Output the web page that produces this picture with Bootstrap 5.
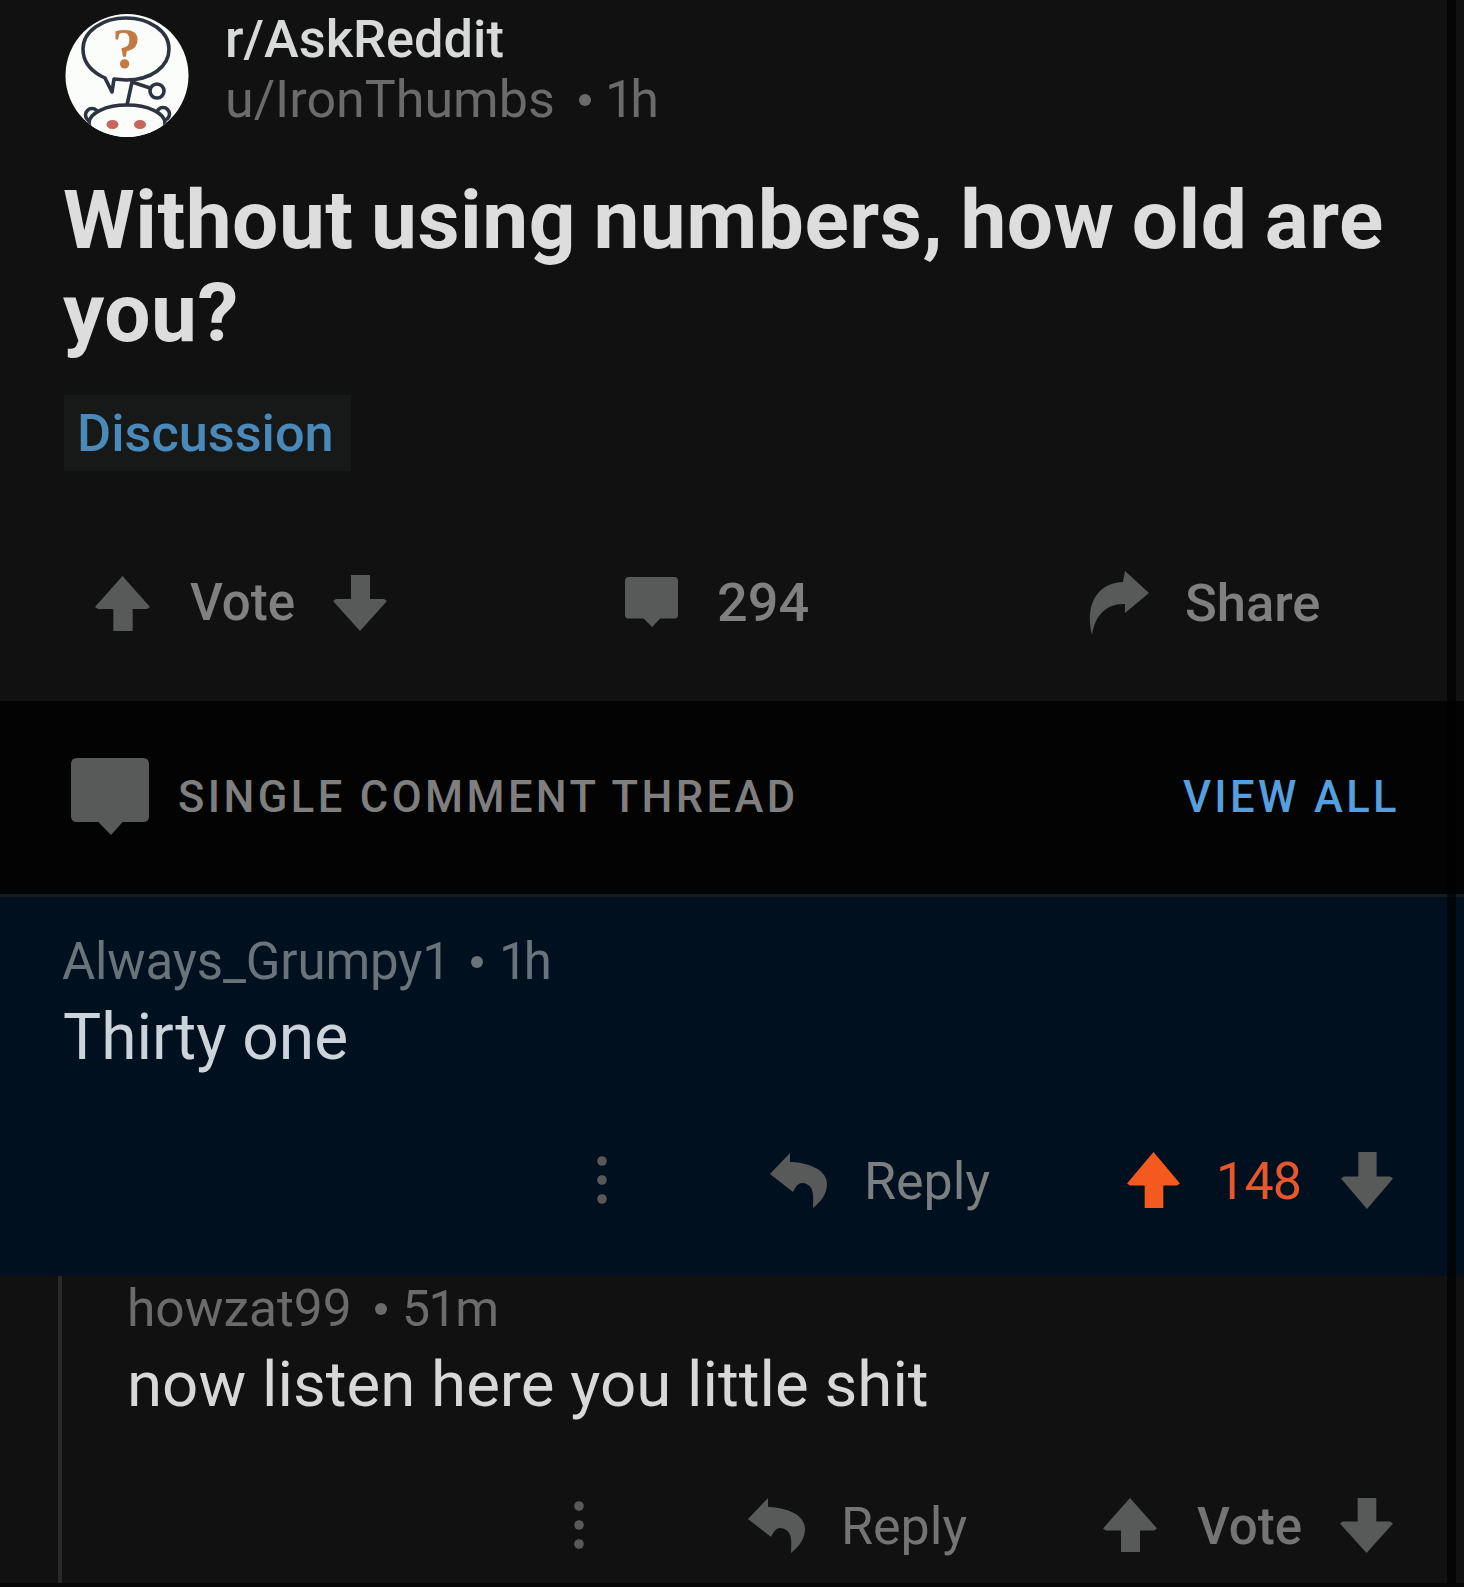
<!doctype html>
<html lang="en">
<head>
<meta charset="utf-8">
<title>r/AskReddit</title>
<link rel="stylesheet" href="https://cdn.jsdelivr.net/npm/bootstrap@5.3.0/dist/css/bootstrap.min.css">
<style>
body{background:#111;font-family:Roboto,"Open Sans",sans-serif;font-size:52px;color:#6b6b6b;white-space:nowrap;overflow:hidden}
.page{height:1587px;border-bottom:4px solid #070707;overflow:hidden}
/* dark seam near the right edge */
.page::after{content:"";position:absolute;top:0;bottom:0;right:8px;width:9px;background:rgba(0,0,0,.65)}
svg{display:block;flex:none;fill:#585a59}
.bullet{flex:none;width:12px;height:12px;border-radius:50%;background:currentColor}
.age{letter-spacing:-4px}
.op{height:701px;padding:8px 0 0 64px}
.avatar{margin:5px 35px 0 1px}
.sub{color:#d8d9d9;font-weight:500;font-size:52.4px;line-height:62px}
.meta-line{line-height:62px}
.op .meta-line{line-height:60px}
.headline{color:#dcdddc;font-weight:700;font-size:82px;line-height:93px;letter-spacing:.5px;word-spacing:-3.5px;margin:36px 0 0 -1px}
.flair{display:inline-block;background:#171919;color:#4a8abb;font-weight:500;font-size:52.3px;line-height:76px;height:76px;width:287px;padding-left:13px;margin-top:35px}
.actions{height:80px;color:#808080}
.actions span{flex:none;line-height:80px}
.op .actions{margin:92px 0 0 31px;font-weight:500;font-size:51px}
.thread-bar{height:193px;background:#030303;padding:0 0 0 71px;font-size:43.5px;font-weight:500;letter-spacing:3.4px;color:#7f7f7f}
.thread-bar a{color:#559fdf;text-decoration:none;margin-right:64px}
.picked{height:382px;background:#00101e;border-top:3px solid #141b22;padding:30px 0 0 62px;color:#68737b}
.picked .meta-line{line-height:70px;font-size:51px}
.said{font-size:64px;line-height:80px;color:#d8d8d8}
.picked .said{color:#ccd4db;margin:1px 0 0 1px}
.picked .actions{margin:62px 0 0 534px;color:#7a7f82}
.picked .actions span,.child .actions span{padding-top:3px}
.child{height:311px;margin-left:58px;border-left:4px solid #292929;padding:2px 0 0 65px}
.child .said{margin-top:5px;font-size:63.6px}
.child .actions{margin:60px 0 0 446px;color:#747474}
.hot{color:#e8572c}
</style>
</head>
<body>
<svg width="0" height="0" class="position-absolute">
<symbol id="up" viewBox="0 0 54 55" preserveAspectRatio="none"><path d="M27 0 54 31 51 33H37V55H18V33H3L0 31Z"/></symbol>
<symbol id="down" viewBox="0 0 54 56" preserveAspectRatio="none"><path d="M18 0H37V24H51L54 26 27 56 0 26 3 24H18Z"/></symbol>
<symbol id="bubble" viewBox="0 0 80 80" preserveAspectRatio="none"><path d="M6 0H74Q80 0 80 6V58Q80 64 74 64H53L41 77 28 64H6Q0 64 0 58V6Q0 0 6 0Z"/></symbol>
<symbol id="reply" viewBox="0 0 57 55" preserveAspectRatio="none"><path d="M20 0V9C32 9 57 14 57 31C57 40 52 48 43 55C43 46 46 31 32 30Q27 30 23 39L0 21Z"/></symbol>
<symbol id="dots" viewBox="0 0 12 50"><circle cx="6" cy="6" r="4.8"/><circle cx="6" cy="25" r="4.8"/><circle cx="6" cy="44" r="4.8"/></symbol>
</svg>
<main class="page position-relative">
<article class="op">
<header class="d-flex">
<svg class="avatar" width="125" height="125" viewBox="0 0 125 125"><defs><clipPath id="disc"><circle cx="62" cy="62.500" r="61.500"/></clipPath></defs>
<g clip-path="url(#disc)"><rect width="125" height="125" fill="#fbfdfb"/>
<g fill="#fbfdfb" stroke="#2c3440" stroke-width="3.600" stroke-linejoin="round"><circle cx="27" cy="102" r="6.500"/><circle cx="98" cy="101" r="6.500"/><ellipse cx="62" cy="110" rx="38" ry="18"/><path fill="none" d="M62 92 67 69 85 75"/><circle cx="92" cy="78" r="7"/>
<path d="M36 63C25 57 18 48 18 36C18 18 38 5 61 5S104 18 104 36 86 67 61 67L49 66 47 79 40 65Z"/></g>
<ellipse cx="47.500" cy="111.500" rx="6" ry="4.500" fill="#c6665c"/><ellipse cx="75" cy="111.500" rx="6" ry="4.500" fill="#c6665c"/>
<text x="61.500" y="55" text-anchor="middle" font-family="Liberation Serif" font-weight="700" font-size="58" fill="#c17a42">?</text></g></svg>
<div>
<div class="sub">r/AskReddit</div>
<div class="meta-line d-flex align-items-center"><span style="width:354px">u/IronThumbs</span><span class="bullet"></span><span class="age" style="margin-left:14px">1h</span></div>
</div>
</header>
<h1 class="headline mb-0">Without using numbers, how old are<br>you?</h1>
<div class="d-flex"><span class="flair">Discussion</span></div>
<div class="actions d-flex align-items-center">
<svg width="55" height="55"><use href="#up"/></svg><span style="margin-left:40px;width:143px">Vote</span><svg width="54" height="56"><use href="#down"/></svg>
<svg width="53" height="52" style="margin-left:238px"><use href="#bubble"/></svg><span style="margin-left:39px;width:371px;font-size:54px">294</span>
<svg width="61" height="64" viewBox="0 0 61 64"><path d="M37 0 61 22 37 42V33C19 32 7 44 4 64C-3 37 7 12 35 11Z"/></svg><span style="margin-left:36px;font-size:52.5px">Share</span>
</div>
</article>
<section class="thread-bar d-flex align-items-center">
<svg width="78" height="80"><use href="#bubble"/></svg><span class="flex-grow-1" style="margin-left:29px">SINGLE COMMENT THREAD</span><a href="#">VIEW ALL</a>
</section>
<article class="picked">
<div class="meta-line d-flex align-items-center"><span style="width:409px;letter-spacing:-.15px">Always_Grumpy1</span><span class="bullet"></span><span class="age" style="margin-left:16px">1h</span></div>
<div class="said">Thirty one</div>
<div class="actions d-flex align-items-center">
<svg width="12" height="50"><use href="#dots"/></svg><svg width="57" height="55" style="margin-left:162px"><use href="#reply"/></svg><span style="margin-left:37px;width:263px">Reply</span>
<svg width="53" height="56" style="fill:#f4591f"><use href="#up"/></svg><span class="hot" style="margin-left:36px;width:125px;letter-spacing:-.8px">148</span><svg width="52" height="57"><use href="#down"/></svg>
</div>
</article>
<article class="child">
<div class="meta-line d-flex align-items-center"><span style="width:248px;font-size:51.5px">howzat99</span><span class="bullet"></span><span style="margin-left:15px;font-size:50px;letter-spacing:-1.5px">51m</span></div>
<div class="said">now listen here you little shit</div>
<div class="actions d-flex align-items-center">
<svg width="12" height="50"><use href="#dots"/></svg><svg width="57" height="55" style="margin-left:163px"><use href="#reply"/></svg><span style="margin-left:36px;width:262px">Reply</span>
<svg width="54" height="54"><use href="#up"/></svg><span style="margin-left:40px;width:143px;font-weight:500;font-size:51px">Vote</span><svg width="53" height="55"><use href="#down"/></svg>
</div>
</article>
</main>
<script src="https://cdn.jsdelivr.net/npm/bootstrap@5.3.0/dist/js/bootstrap.bundle.min.js"></script>
</body>
</html>
